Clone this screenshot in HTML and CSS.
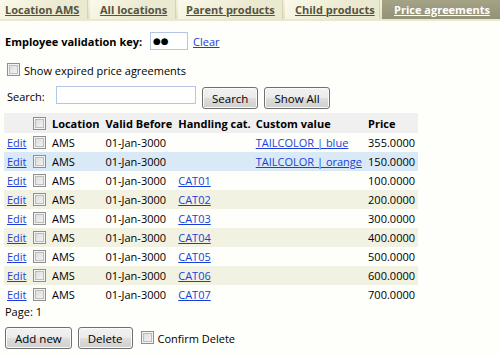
FILE: index.html
```html
<!DOCTYPE html>
<html lang="en">
<head>
    <meta charset="UTF-8">
    <title>Price agreements</title>
    <link rel="stylesheet" href="styles.css">
</head>
<body>
<div class="tabs">
    <a href="#" class="tab">Location AMS</a>
    <a href="#" class="tab">All locations</a>
    <a href="#" class="tab">Parent products</a>
    <a href="#" class="tab">Child products</a>
    <a href="#" class="tab active">Price agreements</a>
</div>

<div class="content">
    <div class="key-row">
        <label class="key-label">Employee validation key:</label>
        <input type="text" class="key-input" value="●●">
        <a href="#">Clear</a>
    </div>

    <div class="expired-row">
        <input type="checkbox" class="cb">
        <span>Show expired price agreements</span>
    </div>

    <div class="search-row">
        <span class="search-label">Search:</span>
        <input type="text" class="search-input">
        <button class="btn">Search</button>
        <button class="btn">Show All</button>
    </div>

    <table class="grid">
        <tr class="head">
            <th></th>
            <th><input type="checkbox" class="cb"></th>
            <th>Location</th>
            <th>Valid Before</th>
            <th>Handling cat.</th>
            <th class="custom-head">Custom value</th>
            <th>Price</th>
        </tr>
        <tr>
            <td><a href="#">Edit</a></td>
            <td><input type="checkbox" class="cb"></td>
            <td>AMS</td>
            <td>01-Jan-3000</td>
            <td></td>
            <td><a href="#">TAILCOLOR | blue</a></td>
            <td class="num">355.0000</td>
        </tr>
        <tr class="selected">
            <td><a href="#">Edit</a></td>
            <td><input type="checkbox" class="cb"></td>
            <td>AMS</td>
            <td>01-Jan-3000</td>
            <td></td>
            <td><a href="#">TAILCOLOR | orange</a></td>
            <td class="num">150.0000</td>
        </tr>
        <tr>
            <td><a href="#">Edit</a></td>
            <td><input type="checkbox" class="cb"></td>
            <td>AMS</td>
            <td>01-Jan-3000</td>
            <td><a href="#">CAT01</a></td>
            <td></td>
            <td class="num">100.0000</td>
        </tr>
        <tr class="alt">
            <td><a href="#">Edit</a></td>
            <td><input type="checkbox" class="cb"></td>
            <td>AMS</td>
            <td>01-Jan-3000</td>
            <td><a href="#">CAT02</a></td>
            <td></td>
            <td class="num">200.0000</td>
        </tr>
        <tr>
            <td><a href="#">Edit</a></td>
            <td><input type="checkbox" class="cb"></td>
            <td>AMS</td>
            <td>01-Jan-3000</td>
            <td><a href="#">CAT03</a></td>
            <td></td>
            <td class="num">300.0000</td>
        </tr>
        <tr class="alt">
            <td><a href="#">Edit</a></td>
            <td><input type="checkbox" class="cb"></td>
            <td>AMS</td>
            <td>01-Jan-3000</td>
            <td><a href="#">CAT04</a></td>
            <td></td>
            <td class="num">400.0000</td>
        </tr>
        <tr>
            <td><a href="#">Edit</a></td>
            <td><input type="checkbox" class="cb"></td>
            <td>AMS</td>
            <td>01-Jan-3000</td>
            <td><a href="#">CAT05</a></td>
            <td></td>
            <td class="num">500.0000</td>
        </tr>
        <tr class="alt">
            <td><a href="#">Edit</a></td>
            <td><input type="checkbox" class="cb"></td>
            <td>AMS</td>
            <td>01-Jan-3000</td>
            <td><a href="#">CAT06</a></td>
            <td></td>
            <td class="num">600.0000</td>
        </tr>
        <tr>
            <td><a href="#">Edit</a></td>
            <td><input type="checkbox" class="cb"></td>
            <td>AMS</td>
            <td>01-Jan-3000</td>
            <td><a href="#">CAT07</a></td>
            <td></td>
            <td class="num">700.0000</td>
        </tr>
    </table>

    <div class="pager">Page: 1</div>

    <div class="actions">
        <button class="btn">Add new</button>
        <button class="btn">Delete</button>
        <input type="checkbox" class="cb">
        <span>Confirm Delete</span>
    </div>
</div>
</body>
</html>
```

FILE: styles.css
```css
body {
    margin: 0;
    font-family: "Open Sans", Arial, sans-serif;
    font-size: 11px;
    color: #000;
    background-color: #fefefb;
}

a {
    color: #1a3fd8;
}

/* tab strip */
.tabs {
    display: flex;
    height: 19px;
    background: linear-gradient(#f3f2de, #e4e2c4);
    border-bottom: 2px solid #e9e8d0;
}

.tab {
    display: block;
    box-sizing: border-box;
    flex: none;
    line-height: 19px;
    margin-right: 2px;
    font-weight: bold;
    font-size: 11px;
    white-space: nowrap;
    color: #55533f;
    background: linear-gradient(135deg, #fbfaec, #ebe9cf 60%);
    border-right: 1px solid #d6d4b4;
}

.tab:nth-child(1) { width: 88px; padding-left: 5px; }
.tab:nth-child(2) { width: 86px; padding-left: 10px; }
.tab:nth-child(3) { width: 105px; padding-left: 8px; }
.tab:nth-child(4) { width: 95px; padding-left: 10px; }

.tab.active {
    flex: 1;
    color: #fff;
    padding-left: 12px;
    margin-right: 0;
    background: linear-gradient(#a5a386, #939176);
    border-right: none;
}

.content {
    padding: 0 4px;
}

.key-row {
    display: flex;
    align-items: center;
    height: 20px;
    margin-top: 10px;
    padding-left: 1px;
}

.key-label {
    font-weight: bold;
    width: 145px;
}

.key-input {
    width: 32px;
    height: 14px;
    padding: 1px 2px;
    margin: 0 5px 0 0;
    border: 1px solid #b4c6e6;
    font-size: 9px;
    font-family: "DejaVu Sans", sans-serif;
}

.expired-row {
    display: flex;
    align-items: center;
    gap: 4px;
    margin-top: 10px;
    padding-left: 3px;
    height: 16px;
}

.expired-row span {
    margin-top: 2px;
}

.search-row {
    display: flex;
    align-items: flex-start;
    margin-top: 9px;
    height: 24px;
    padding-left: 3px;
}

.search-label {
    width: 49px;
    margin-top: 3px;
}

.search-input {
    width: 134px;
    height: 14px;
    padding: 1px 2px;
    margin: 0 6px 0 0;
    border: 1px solid #b4c6e6;
}

.btn {
    font-family: inherit;
    font-size: 11.5px;
    height: 22px;
    padding: 0 9px;
    margin-right: 6px;
    color: #000;
    border: 1px solid #707070;
    border-radius: 3px;
    background: linear-gradient(#f2f2f2 0%, #ebebeb 48%, #dddddd 52%, #cfcfcf 100%);
    box-shadow: inset 0 0 0 1px #fafafa;
}

.search-row .btn {
    margin-top: 1px;
}

/* custom checkbox, old windows look */
.cb {
    appearance: none;
    -webkit-appearance: none;
    width: 13px;
    height: 13px;
    margin: 0;
    border: 1px solid #8f8f8f;
    background: linear-gradient(135deg, #d9d9d9, #f6f6f6);
    box-shadow: inset 0 0 0 1px #f3f3f3, inset 0 0 0 2px #bdbdbd;
}

/* grid */
.grid {
    border-collapse: collapse;
    margin-top: 3px;
    width: 414px;
}

.grid th,
.grid td {
    padding: 0 3px;
    height: 19px;
    line-height: 15px;
    text-align: left;
    white-space: nowrap;
}

.grid th {
    background-color: #f0f0f0;
    font-weight: bold;
    height: 20px;
}

.grid .cb {
    display: block;
}

.grid th:nth-child(1), .grid td:nth-child(1) { width: 24px; }
.grid th:nth-child(2), .grid td:nth-child(2) { width: 14px; }
.grid th:nth-child(3), .grid td:nth-child(3) { width: 44px; }
.grid th:nth-child(4), .grid td:nth-child(4) { width: 67px; }
.grid th:nth-child(5), .grid td:nth-child(5) { width: 69px; }
.grid th:nth-child(6), .grid td:nth-child(6) { width: 107px; padding-left: 2px; }

.grid .custom-head {
    padding-left: 7px;
}

.grid td.num {
    text-align: right;
}

.grid tr.alt td {
    background-color: #f2f2e2;
}

.grid tr.selected td {
    background-color: #d9e9f6;
}

.pager {
    padding-left: 1px;
    line-height: 16px;
}

.actions {
    display: flex;
    align-items: center;
    margin-top: 7px;
    padding-left: 1px;
}

.actions .cb {
    margin: 0 4px 2px 2px;
}
```
